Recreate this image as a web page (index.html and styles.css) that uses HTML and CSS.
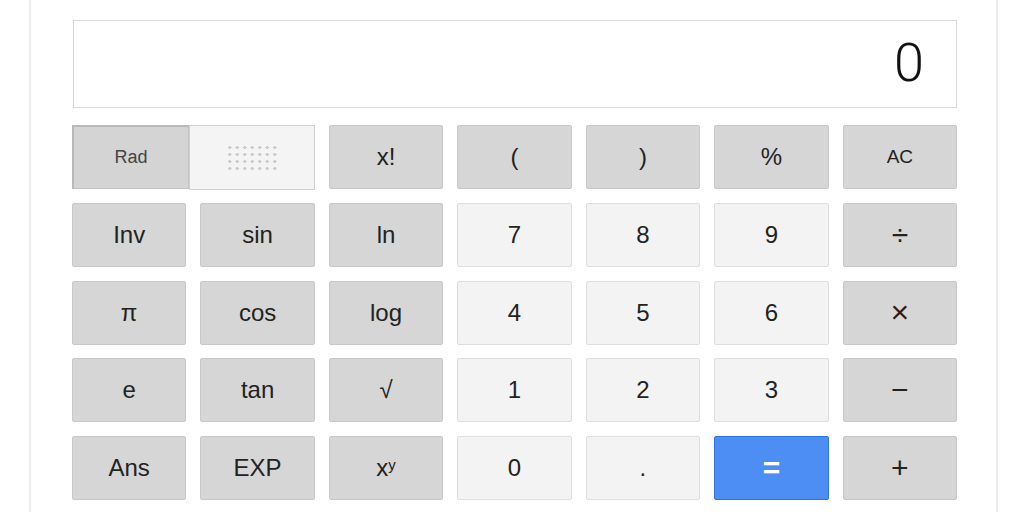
FILE: index.html
```
<!DOCTYPE html>
<html>
<head>
    <meta charset="utf-8">
    <title>Calculator</title>
    <link rel="stylesheet" href="styles.css">
</head>
<body>
<div class="card">
    <div class="display">0</div>
    <div class="keys">
        <div class="toggle">
            <div class="rad">Rad</div>
            <div class="deg"><span class="dots"></span></div>
        </div>
        <div class="key gray">x!</div>
        <div class="key gray">(</div>
        <div class="key gray">)</div>
        <div class="key gray">%</div>
        <div class="key gray small">AC</div>

        <div class="key gray">Inv</div>
        <div class="key gray">sin</div>
        <div class="key gray">ln</div>
        <div class="key light">7</div>
        <div class="key light">8</div>
        <div class="key light">9</div>
        <div class="key gray op">÷</div>

        <div class="key gray">π</div>
        <div class="key gray">cos</div>
        <div class="key gray">log</div>
        <div class="key light">4</div>
        <div class="key light">5</div>
        <div class="key light">6</div>
        <div class="key gray op times">×</div>

        <div class="key gray">e</div>
        <div class="key gray">tan</div>
        <div class="key gray">√</div>
        <div class="key light">1</div>
        <div class="key light">2</div>
        <div class="key light">3</div>
        <div class="key gray op">−</div>

        <div class="key gray">Ans</div>
        <div class="key gray">EXP</div>
        <div class="key gray">x<sup>y</sup></div>
        <div class="key light">0</div>
        <div class="key light">.</div>
        <div class="key blue">=</div>
        <div class="key gray op">+</div>
    </div>
</div>
</body>
</html>
```
FILE: styles.css
```
* {
    margin: 0;
    padding: 0;
    box-sizing: border-box;
}

body {
    background: #fff;
    font-family: "Liberation Sans", Arial, sans-serif;
    color: #222;
}

.card {
    margin-left: 29px;
    width: 969px;
    height: 512px;
    border-left: 2px solid #ededed;
    border-right: 2px solid #ededed;
    padding: 20px 0 0 42px;
}

.display {
    width: 884px;
    height: 88px;
    border: 1px solid #d9d9d9;
    background: #fff;
    text-align: right;
    padding-right: 32px;
    font-family: Roboto, "Liberation Sans", sans-serif;
    font-weight: 300;
    font-size: 54px;
    line-height: 84px;
    color: #111;
}

.keys {
    margin: 17px 0 0 -1px;
    width: 885px;
    display: grid;
    grid-template-columns: repeat(7, 1fr);
    grid-auto-rows: 64px;
    column-gap: 14.2px;
    row-gap: 13.75px;
}

.key {
    display: flex;
    align-items: center;
    justify-content: center;
    border-radius: 2px;
    font-size: 24px;
}

.gray {
    background: #d6d6d6;
    border: 1px solid #c8c8c8;
}

.light {
    background: #f3f3f3;
    border: 1px solid #dedede;
}

.blue {
    background: #4d8ef5;
    border: 1px solid #2f74e6;
    color: #fff;
    font-weight: bold;
    font-size: 30px;
}

.small {
    font-size: 19px;
}

.op {
    font-size: 30px;
}

.times {
    font-size: 32px;
}

.key sup {
    font-size: 15px;
    position: relative;
    top: -4px;
}

.toggle {
    grid-column: span 2;
    display: flex;
}

.rad {
    width: 117px;
    background: #d4d4d4;
    border: 1px solid #c4c4c4;
    border-top: 2px solid #b9b9b9;
    border-left: 2px solid #b9b9b9;
    display: flex;
    align-items: center;
    justify-content: center;
    font-size: 18px;
    color: #444;
}

.deg {
    flex: 1;
    background: #f4f4f4;
    border: 1px solid #cfcfcf;
    margin-bottom: -1px;
    display: flex;
    align-items: center;
    justify-content: center;
}

.dots {
    width: 52.5px;
    height: 28px;
    background-image: radial-gradient(circle, #c9c9c9 1.4px, transparent 1.6px);
    background-size: 7.5px 7px;
}
```
